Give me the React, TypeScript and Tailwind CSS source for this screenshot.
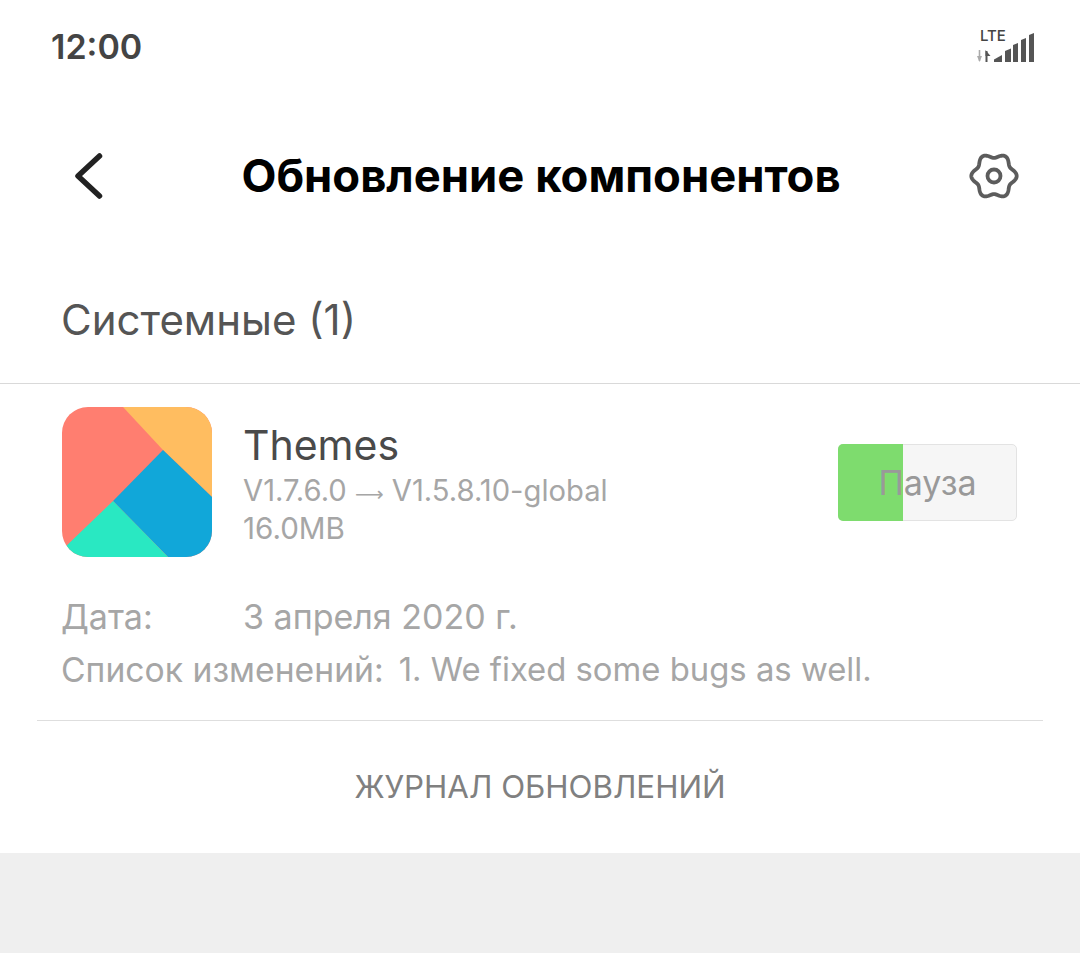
import React from 'react';

function SignalIcon() {
    return (
        <svg width="58" height="30" viewBox="0 0 58 30" className="block text-[#555555]">
            <path d="M2.500 17v11" stroke="#aaaaaa" strokeWidth="1.600" fill="none" />
            <path d="M0 23l2.500 6 2.500-6z" fill="#aaaaaa" />
            <path d="M9.500 18v11" stroke="currentColor" strokeWidth="2" fill="none" />
            <path d="M8.500 17l5 6h-5z" fill="currentColor" />
            <path d="M17 29v-2.500l8-4.500v7z" fill="currentColor" />
            <path d="M28 29v-11l6-2.500v13.500z" fill="currentColor" />
            <path d="M36 29v-17l5-2v19z" fill="currentColor" />
            <path d="M44 29v-22l5-2v24z" fill="currentColor" />
            <path d="M52 29v-27l5-2v29z" fill="currentColor" />
        </svg>
    );
}

// six rounded lobes: radius follows a cosine around the centre
function gearPath() {
    const pts = Array.from({ length: 144 }, (_, i) => {
        const a = (i * Math.PI) / 72;
        const r = 20.4 + 2.3 * Math.cos(6 * a);
        return `${(25 + r * Math.cos(a)).toFixed(2)} ${(25 + r * Math.sin(a)).toFixed(2)}`;
    });
    return `M${pts.join('L')}Z`;
}

function GearIcon() {
    return (
        <svg width="50" height="50" viewBox="0 0 50 50" fill="none" stroke="#5c5c5c" strokeWidth="3.800" strokeLinejoin="round">
            <path d={gearPath()} />
            <circle cx="25" cy="25" r="6.500" />
        </svg>
    );
}

function ThemesLogo() {
    return (
        <svg width="150" height="150" viewBox="0 0 150 150" className="shrink-0 rounded-[26px]">
            <rect width="150" height="150" fill="#ff7e70" />
            <path d="M61 0H150V90L101 43z" fill="#ffbd60" />
            <path d="M101 43L150 90V150H106L51 94z" fill="#11a7d9" />
            <path d="M51 94L106 150H0V143z" fill="#29e8c2" />
        </svg>
    );
}

export default function App() {
    return (
        <div className="flex h-[953px] w-[1080px] flex-col overflow-hidden bg-white font-['Inter','Noto_Sans',sans-serif]">
            {/* status bar */}
            <div className="flex h-[96px] items-start justify-between pl-[51px] pr-[45px] pt-[26px]">
                <span className="text-[34px] font-semibold leading-[42px] text-[#444444]">12:00</span>
                <div className="relative mt-[7px]">
                    <span className="absolute left-[3px] top-[-5px] text-[15px] font-medium leading-[16px] text-[#444444]">LTE</span>
                    <SignalIcon />
                </div>
            </div>

            {/* header */}
            <div className="grid h-[160px] grid-cols-[1fr_auto_1fr] items-center pl-[64px] pr-[61px]">
                <svg width="48" height="48" viewBox="0 0 48 48" fill="none" stroke="#222222" strokeWidth="5.500" strokeLinecap="round" strokeLinejoin="round">
                    <path d="M35.500 4L14 24l21.500 20" />
                </svg>
                <h1 className="ml-[-1px] text-[45.4px] font-bold leading-[56px] text-black">Обновление компонентов</h1>
                <div className="flex justify-end">
                    <GearIcon />
                </div>
            </div>

            {/* section title */}
            <div className="flex h-[128px] items-center border-b border-[#d9d9d9] px-[61px]">
                <span className="text-[42px] leading-[50px] text-[#555555]">Системные (1)</span>
            </div>

            {/* update card */}
            <div className="flex items-start pl-[62px] pr-[63px] pt-[23px]">
                <ThemesLogo />
                <div className="ml-[31px] flex flex-1 flex-col pt-[16px]">
                    <span className="text-[41px] leading-[44px] text-[#4a4a4a]">Themes</span>
                    <span className="mt-[5px] text-[29.2px] leading-[38px] text-[#a6a6a6]">
                        V1.7.6.0 <span className="font-['DejaVu_Sans'] text-[20px] leading-none">⟶</span> V1.5.8.10-global
                    </span>
                    <span className="text-[29.6px] leading-[36px] text-[#a6a6a6]">16.0MB</span>
                </div>
                <button className="relative mt-[37px] flex h-[77px] w-[179px] items-center justify-center rounded-[5px] border border-[#e3e3e3] bg-[#f6f6f6]">
                    <div className="absolute bottom-[-1px] left-[-1px] top-[-1px] w-[65px] rounded-l-[5px] bg-[#7edc6e]" />
                    <span className="relative text-[34px] leading-[40px] text-[#999999]">Пауза</span>
                </button>
            </div>

            <div className="mt-[40px] flex flex-col gap-[14px] px-[61px] text-[34px] leading-[39px] text-[#a6a6a6]">
                <div className="flex">
                    <span className="w-[182px]">Дата:</span>
                    <span>3 апреля 2020 г.</span>
                </div>
                <div className="flex gap-[15px]">
                    <span className="text-[33.7px]">Список изменений:</span>
                    <span className="text-[32.85px]">1. We fixed some bugs as well.</span>
                </div>
            </div>

            <div className="mx-[37px] mt-[31px] border-t border-[#dedede]" />

            <div className="flex h-[132px] items-center justify-center">
                <span className="text-[31.3px] leading-[40px] text-[#808080]">ЖУРНАЛ ОБНОВЛЕНИЙ</span>
            </div>

            <div className="flex-1 bg-[#efefef]" />
        </div>
    );
}
